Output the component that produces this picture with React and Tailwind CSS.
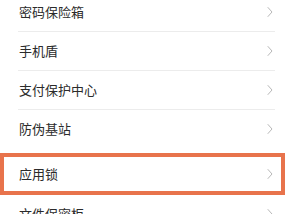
const rows = [
  { label: "密码保险箱", divider: true },
  { label: "手机盾", divider: true },
  { label: "支付保护中心", divider: true },
  { label: "防伪基站", divider: false },
];

function Chevron() {
  return (
    <svg width="6" height="12" viewBox="0 0 6 12" className="shrink-0">
      <path d="M1 1.5l4 4.5-4 4.5" fill="none" stroke="#b8b8b8" strokeWidth="1" strokeLinecap="round" strokeLinejoin="round" />
    </svg>
  );
}

function Row({ label, divider }) {
  return (
    <div className="pl-[18px] pr-[10px]">
      <div className={`flex items-center justify-between pl-px pr-[2px] ${divider ? "h-[39px] border-b border-[#ececec]" : "h-[38px]"}`}>
        <span className="text-[13px] text-[#2b2b2b]">{label}</span>
        <Chevron />
      </div>
    </div>
  );
}

export default function App() {
  return (
    <div
      className="w-[285px] h-[214px] overflow-hidden bg-white"
      style={{ fontFamily: '"Noto Sans CJK SC", "Noto Sans", sans-serif' }}
    >
      <div className="-mt-[7px]">
        {rows.map((r) => (
          <Row key={r.label} {...r} />
        ))}
        <div className="h-[5px]" />
        <div className="h-[42px] border-4 border-[#e8734c] flex items-center justify-between pl-[15px] pr-[8px]">
          <span className="text-[13px] text-[#2b2b2b]">应用锁</span>
          <Chevron />
        </div>
        <Row label="文件保密柜" divider={false} />
      </div>
    </div>
  );
}
